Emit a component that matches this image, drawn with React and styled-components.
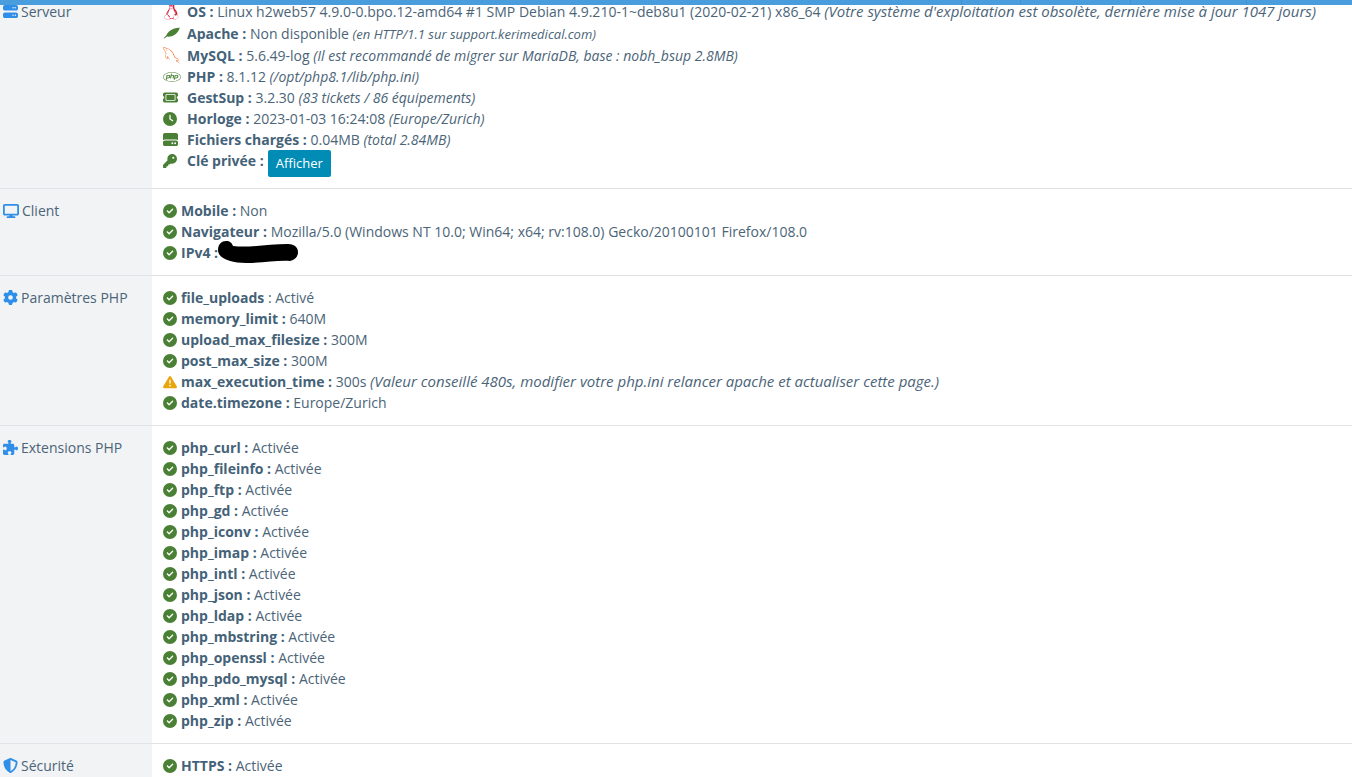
import React from "react";
import styled, { createGlobalStyle } from "styled-components";
import {
  FaServer, FaDisplay, FaGear, FaPuzzlePiece, FaShieldHalved, FaCircleCheck,
  FaTriangleExclamation, FaTicket, FaClock, FaHardDrive, FaKey, FaLinux, FaPhp,
} from "react-icons/fa6";
import { GrMysql } from "react-icons/gr";

const GlobalStyle = createGlobalStyle`
  body {
    margin: 0;
    background: #fff;
    color: #4b6478;
    font: 14px/21px "Open Sans", "Noto Sans", sans-serif;
  }
`;

const TopBar = styled.header`
  position: fixed;
  inset: 0 0 auto 0;
  display: flex;
  justify-content: flex-end;
  height: 5px;
  background: #4a9ddc;
`;

const TopBarCell = styled.span`
  box-sizing: border-box;
  width: ${(p) => p.$width}px;
  border-left: 1px solid #4490cb;
`;

const Table = styled.table`
  width: 100%;
  border-collapse: collapse;
`;

const Section = styled.tr`
  & + & {
    border-top: 1px solid #dfe3e6;
  }
`;

const SectionTitle = styled.th`
  box-sizing: border-box;
  width: 152px;
  padding: ${(p) => (p.$first ? "1px 3px 11px" : "11px 3px 12px")};
  background: #f2f3f5;
  font-weight: 400;
  text-align: left;
  vertical-align: top;
`;

const TitleLine = styled.span`
  display: flex;
  align-items: center;
  gap: 3px;

  svg {
    flex: none;
    color: #2f8fe8;
  }
`;

const SectionBody = styled.td`
  padding: ${(p) => (p.$first ? "1px 11px 11px" : "11px 11px 12px")};
  vertical-align: top;
`;

const Line = styled.div`
  display: flex;
  align-items: ${(p) => (p.$top ? "flex-start" : "center")};
  gap: 4px;
  min-height: ${(p) => (p.$tall ? 22 : 21)}px;
`;

const IconSlot = styled.span`
  flex: none;
  display: flex;
  align-items: center;
  width: ${(p) => (p.$wide ? 20 : 14)}px;
  height: 21px;
  color: ${(p) => p.$color || "#4a8035"};
`;

const Label = styled.strong`
  font-weight: 700;
  color: #446278;
`;

const Note = styled.em`
  font-size: ${(p) => p.$size || 15}px;
  line-height: 1;
`;

const RevealButton = styled.button`
  height: 27px;
  padding: 0 8px;
  border: 0;
  border-radius: 2px;
  background: #008cb5;
  color: #fff;
  font: 13px/21px "Open Sans", "Noto Sans", sans-serif;
`;

const Redaction = styled.svg`
  display: block;
  width: 80px;
  height: 22px;
  margin: -1px 0 0 -4px;
`;

const Feather = () => (
  <svg width="17" height="12" viewBox="0 0 17 12" fill="currentColor" aria-hidden="true">
    <path d="M.6 11.2 3.2 8.6C4.2 5.8 7.2 3 10.600 1.800 13 1 15.200 .8 16.800 .8 16.200 3.200 14.400 6 11.800 7.800 9.400 9.400 6.400 10 4.200 9.600L1.200 11.600Z" />
  </svg>
);

const server = [
  { icon: <FaLinux size={17} />, color: "#d9203c", label: "OS :", value: "Linux h2web57 4.9.0-0.bpo.12-amd64 #1 SMP Debian 4.9.210-1~deb8u1 (2020-02-21) x86_64", note: "(Votre système d'exploitation est obsolète, dernière mise à jour 1047 jours)", size: 15 },
  { icon: <Feather />, label: "Apache :", value: "Non disponible", note: "(en HTTP/1.1 sur support.kerimedical.com)", tall: true, size: 13 },
  { icon: <GrMysql size={17} />, color: "#f27a35", label: "MySQL :", value: "5.6.49-log", note: "(Il est recommandé de migrer sur MariaDB, base : nobh_bsup 2.8MB)", tall: true, size: 14 },
  { icon: <FaPhp size={18} />, label: "PHP :", value: "8.1.12", note: "(/opt/php8.1/lib/php.ini)", size: 14 },
  { icon: <FaTicket size={15} />, label: "GestSup :", value: "3.2.30", note: "(83 tickets / 86 équipements)", size: 14 },
  { icon: <FaClock size={14} />, label: "Horloge :", value: "2023-01-03 16:24:08", note: "(Europe/Zurich)", size: 14 },
  { icon: <FaHardDrive size={15} />, label: "Fichiers chargés :", value: "0.04MB", note: "(total 2.84MB)", size: 14 },
];

const settings = [
  ["file_uploads", "Activé"],
  ["memory_limit", "640M"],
  ["upload_max_filesize", "300M"],
  ["post_max_size", "300M"],
  ["max_execution_time", "300s", "(Valeur conseillé 480s, modifier votre php.ini relancer apache et actualiser cette page.)"],
  ["date.timezone", "Europe/Zurich"],
];

const extensions = [
  "curl", "fileinfo", "ftp", "gd", "iconv", "imap", "intl", "json",
  "ldap", "mbstring", "openssl", "pdo_mysql", "xml", "zip",
];

const Group = ({ icon, title, first, children }) => (
  <Section>
    <SectionTitle scope="row" $first={first}>
      <TitleLine>{icon}{title}</TitleLine>
    </SectionTitle>
    <SectionBody $first={first}>{children}</SectionBody>
  </Section>
);

const Check = ({ label, value, note, children }) => (
  <Line>
    <IconSlot $color={note && "#e8a60c"}>
      {note ? <FaTriangleExclamation size={14} /> : <FaCircleCheck size={14} />}
    </IconSlot>
    <span>
      <Label>{label}</Label> {value} {note && <Note>{note}</Note>}
    </span>
    {children}
  </Line>
);

export default function App() {
  return (
    <>
      <GlobalStyle />
      <TopBar>
        {[59, 110, 116, 106].map((width) => <TopBarCell key={width} $width={width} />)}
      </TopBar>
      <Table>
        <tbody>
          <Group first icon={<FaServer size={15} />} title="Serveur">
            {server.map((row) => (
              <Line key={row.label} $tall={row.tall}>
                <IconSlot $wide $color={row.color}>{row.icon}</IconSlot>
                <span>
                  <Label>{row.label}</Label> {row.value} <Note $size={row.size}>{row.note}</Note>
                </span>
              </Line>
            ))}
            <Line $top>
              <IconSlot $wide><FaKey size={14} /></IconSlot>
              <Label>Clé privée :</Label>
              <RevealButton type="button">Afficher</RevealButton>
            </Line>
          </Group>
          <Group icon={<FaDisplay size={16} />} title="Client">
            <Check label="Mobile :" value="Non" />
            <Check label="Navigateur :" value="Mozilla/5.0 (Windows NT 10.0; Win64; x64; rv:108.0) Gecko/20100101 Firefox/108.0" />
            <Check label="IPv4 :">
              <Redaction viewBox="0 0 80 22" aria-hidden="true">
                <path d="M0 9C0 3 4 0 8 0 12 0 14 2 15 5 32 7 50 3 70 3 77 3 80 7 80 11 80 16 77 19 72 20 60 19 45 22 28 22 14 22 0 18 0 9Z" />
              </Redaction>
            </Check>
          </Group>
          <Group icon={<FaGear size={15} />} title="Paramètres PHP">
            {settings.map(([name, value, note], i) =>
              i === 0
                ? <Check key={name} label={name} value={`: ${value}`} />
                : <Check key={name} label={`${name} :`} value={value} note={note} />
            )}
          </Group>
          <Group icon={<FaPuzzlePiece size={15} />} title="Extensions PHP">
            {extensions.map((name) => (
              <Check key={name} label={`php_${name} :`} value="Activée" />
            ))}
          </Group>
          <Group icon={<FaShieldHalved size={15} />} title="Sécurité">
            <Check label="HTTPS :" value="Activée" />
          </Group>
        </tbody>
      </Table>
    </>
  );
}
